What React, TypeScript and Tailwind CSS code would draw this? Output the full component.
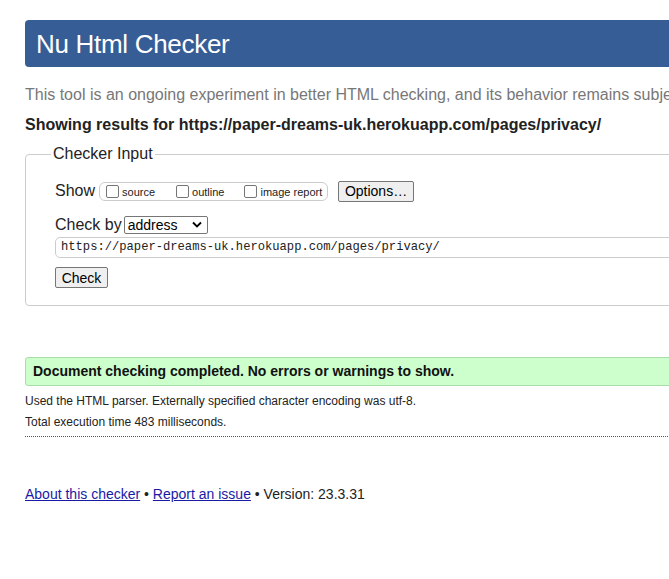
const URL = 'https://paper-dreams-uk.herokuapp.com/pages/privacy/';

const Checkbox = ({ label }: { label: string }) => (
  <label className="flex items-center gap-[3px]">
    <span className="w-[13px] h-[13px] rounded-[2px] border border-[#767676] bg-white" />
    <span className="text-[11px] text-[#222] leading-none mt-[3px]">{label}</span>
  </label>
);

export default function App() {
  return (
    <div className="w-full min-h-[579px] bg-white overflow-hidden font-['Liberation_Sans',Arial,sans-serif] text-[#222]">
      <div className="w-[1000px] pl-[25px] pt-[20px]">
        <header className="h-[47px] bg-[#365d95] rounded-[4px] pl-[11px] flex items-center">
          <h1 className="text-[26px] text-white tracking-[-0.3px] leading-none">Nu Html Checker</h1>
        </header>

        <p className="mt-[19px] text-[16px] text-[#777] whitespace-nowrap leading-[18px]">
          This tool is an ongoing experiment in better HTML checking, and its behavior remains subject to change
        </p>
        <p className="mt-[12px] text-[16px] font-bold text-[#222] whitespace-nowrap leading-[18px]">
          Showing results for {URL}
        </p>

        <fieldset className="mt-[11px] h-[161px] border border-[#ccc] rounded-[4px] px-[29px]">
          <legend className="ml-[-4px] px-[2px] text-[16px] text-[#222] leading-[18px]">Checker Input</legend>

          <div className="flex items-center mt-[18px] h-[20px]">
            <span className="text-[16px]">Show</span>
            <div className="ml-[4px] w-[229px] h-[19px] rounded-[6px] border border-[#ccc] flex items-center pl-[6px]">
              <Checkbox label="source" />
              <div className="ml-[21px]"><Checkbox label="outline" /></div>
              <div className="ml-[20px]"><Checkbox label="image report" /></div>
            </div>
            <button className="ml-[10px] w-[76px] h-[21px] bg-[#efefef] border border-[#767676] rounded-[2px] text-[14px] text-black leading-none">
              Options…
            </button>
          </div>

          <div className="flex items-center mt-[14px] h-[19px]">
            <span className="text-[16px]">Check by</span>
            <div className="ml-[2px] w-[84px] h-[18px] border border-[#767676] rounded-[2px] bg-white flex items-center justify-between pl-[3px] pr-[5px]">
              <span className="text-[14px] text-black leading-none">address</span>
              <svg width="10" height="7" viewBox="0 0 10 7">
                <path d="M1 1.5 L5 5.5 L9 1.5" fill="none" stroke="#000" strokeWidth="1.8" />
              </svg>
            </div>
          </div>

          <div className="mt-[3px] h-[21px] border border-[#ccc] rounded-[5px] flex items-center pl-[5px]">
            <span className="font-['Liberation_Mono','DejaVu_Sans_Mono',monospace] text-[12.15px] text-[#222] leading-none">{URL}</span>
          </div>

          <button className="mt-[9px] w-[53px] h-[21px] bg-[#efefef] border border-[#767676] rounded-[2px] text-[14px] text-black leading-none">
            Check
          </button>
        </fieldset>

        <div className="mt-[51px] h-[29px] bg-[#ccffcc] border border-[#a8dca8] rounded-[3px] flex items-center pl-[7px]">
          <span className="text-[14px] font-bold text-[#111]">Document checking completed. No errors or warnings to show.</span>
        </div>

        <p className="mt-[7px] text-[12px] text-[#222] leading-[16px]">
          Used the HTML parser. Externally specified character encoding was utf-8.
        </p>
        <p className="mt-[5px] text-[12px] text-[#222] leading-[16px]">Total execution time 483 milliseconds.</p>
        <div className="mt-[6px] border-t border-dotted border-[#555]" />

        <p className="mt-[48px] text-[14px] text-[#222] leading-[18px]">
          <a href="#" className="text-[#1a1aa6] underline">About this checker</a>
          {' • '}
          <a href="#" className="text-[#1a1aa6] underline">Report an issue</a>
          {' • Version: 23.3.31'}
        </p>
      </div>
    </div>
  );
}
